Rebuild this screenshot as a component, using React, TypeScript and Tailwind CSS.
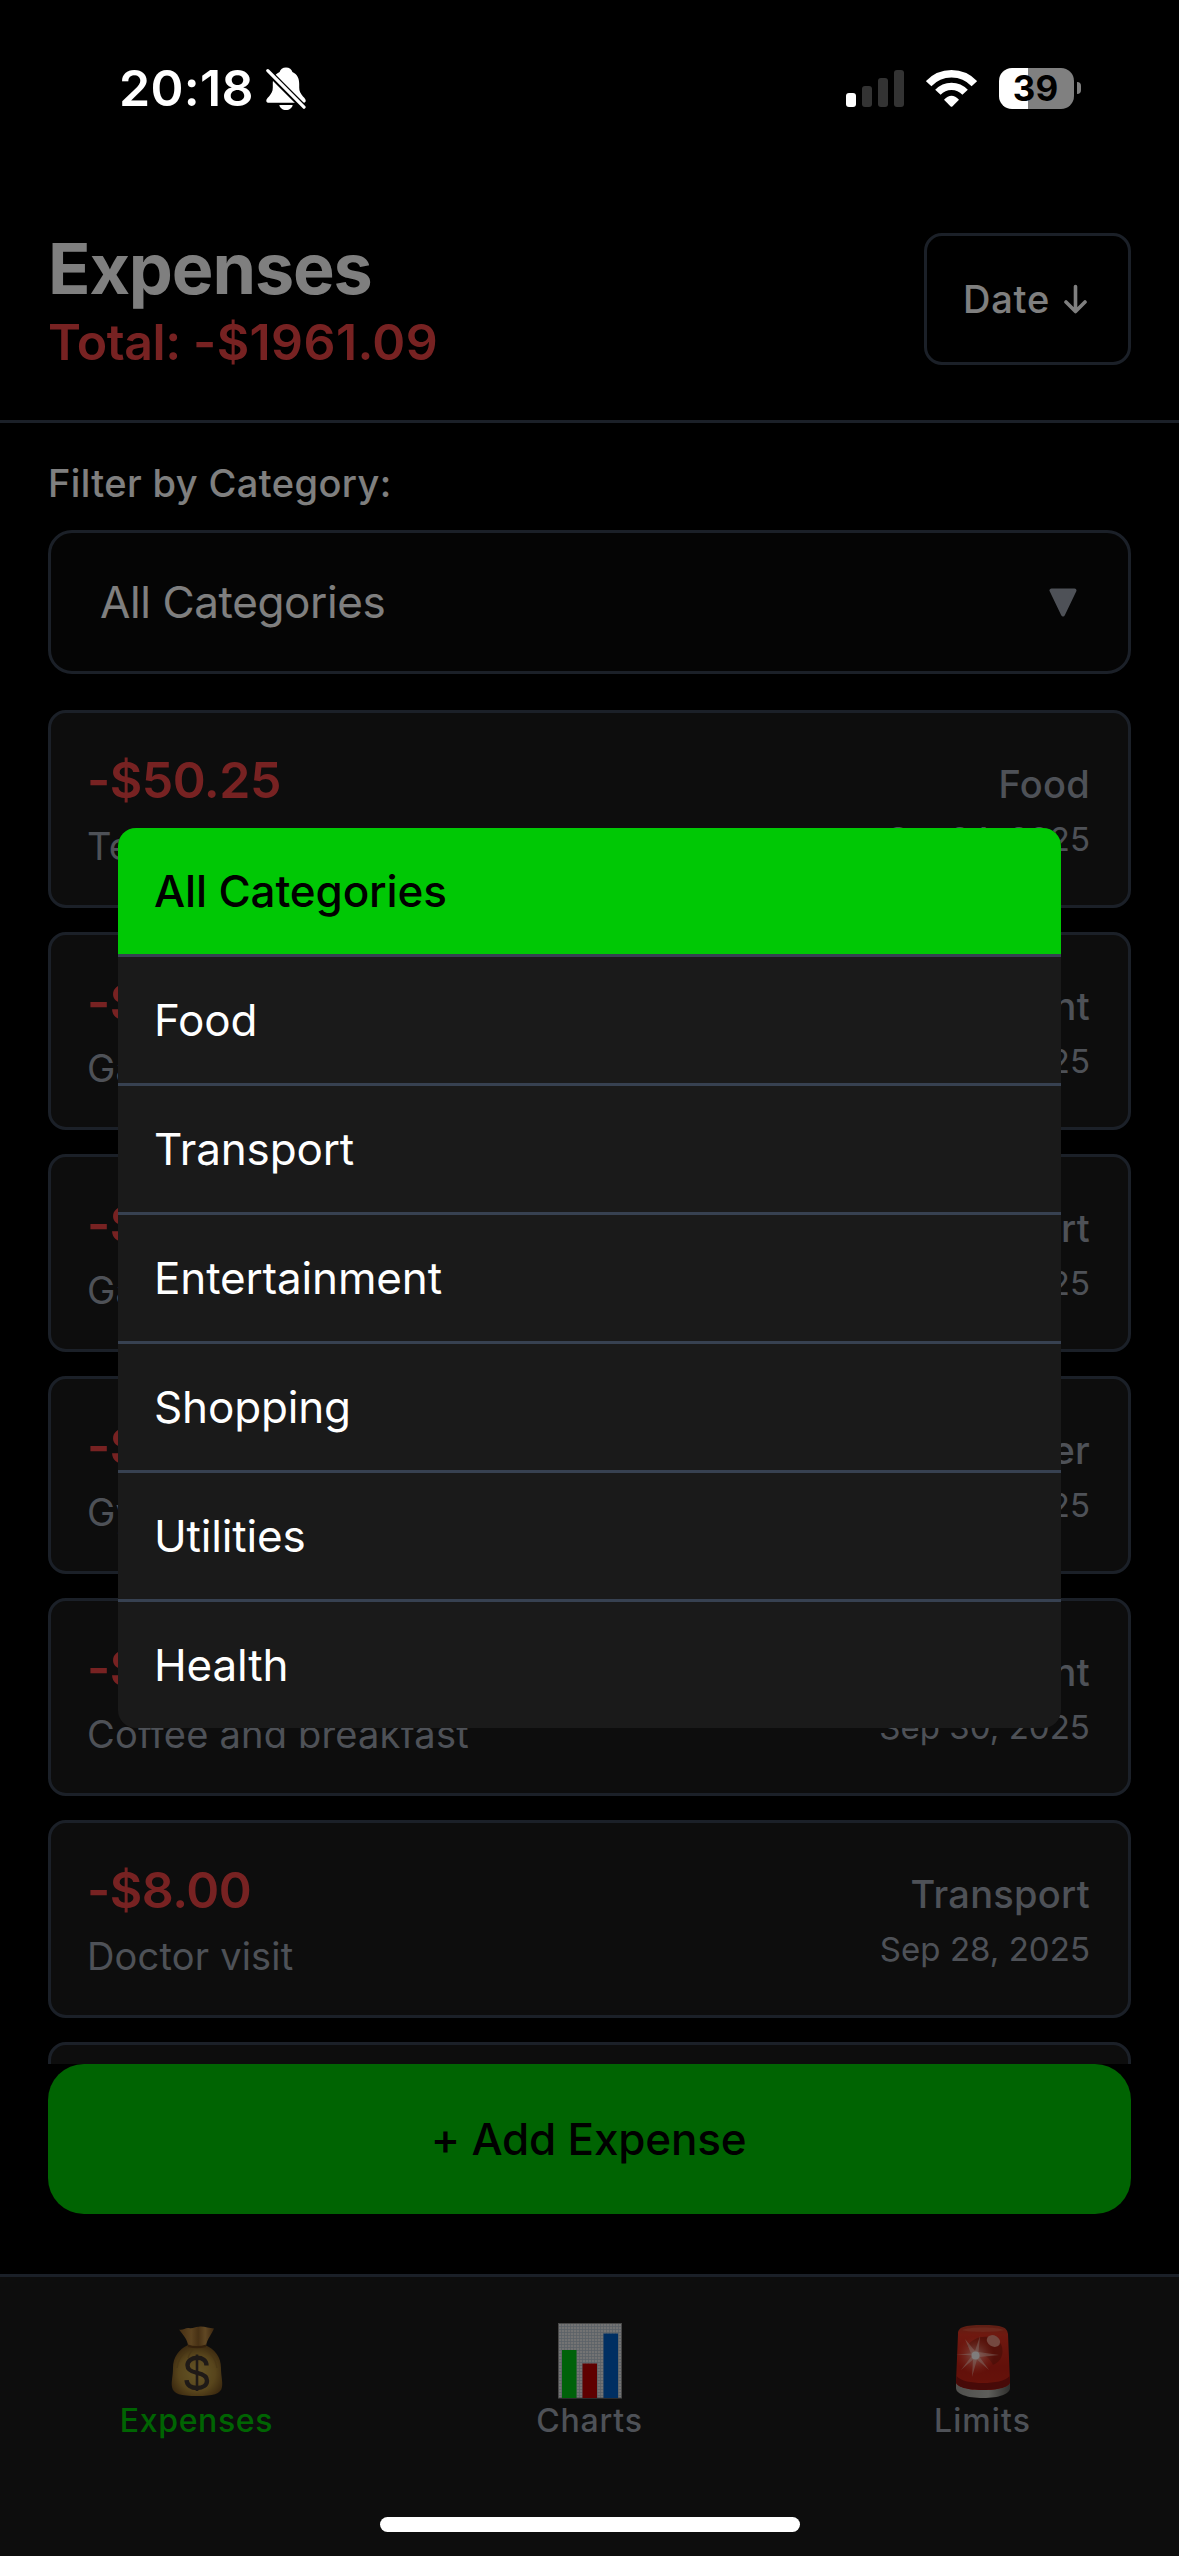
type Expense = { amount: string; note: string; category: string; date: string };

const expenses: Expense[] = [
  { amount: "-$50.25", note: "Team lunch", category: "Food", date: "Oct 24, 2025" },
  { amount: "-$35.00", note: "Games", category: "Entertainment", date: "Oct 15, 2025" },
  { amount: "-$42.80", note: "Gas station", category: "Transport", date: "Oct 10, 2025" },
  { amount: "-$60.00", note: "Gym membership", category: "Other", date: "Oct 5, 2025" },
  { amount: "-$12.50", note: "Coffee and breakfast", category: "Entertainment", date: "Sep 30, 2025" },
  { amount: "-$8.00", note: "Doctor visit", category: "Transport", date: "Sep 28, 2025" },
  { amount: "-$24.99", note: "Movie tickets", category: "Shopping", date: "Sep 27, 2025" },
];

const categories = [
  "All Categories",
  "Food",
  "Transport",
  "Entertainment",
  "Shopping",
  "Utilities",
  "Health",
];

function BellOffIcon() {
  return (
    <svg width="40" height="43" viewBox="0 0 40 43" fill="none">
      <path
        d="M20 0.5c-3.3 0-5.8 1.9-6.4 4.6C8.700 7.300 6.800 11.500 6.800 17v3.500c0 4-1.300 6-3.800 8.900C1 31.500 0.300 32.300 0.300 33.700c0 1.300 1 2.100 2.500 2.100h34.400c1.500 0 2.500-.8 2.500-2.100 0-1.400-.7-2.200-2.700-4.300-2.500-2.900-3.800-4.900-3.800-8.900V17c0-5.500-1.900-9.700-6.800-11.900C25.800 2.400 23.300.5 20 .5z"
        fill="white"
      />
      <path d="M13.300 38h13.400c-.5 2.900-3.200 5-6.700 5s-6.200-2.100-6.700-5z" fill="white" />
      <path d="M1 3.500L39 41.500" stroke="black" strokeWidth="6.500" />
      <path d="M1.800 3.600L38 40.200" stroke="white" strokeWidth="3.200" strokeLinecap="round" />
    </svg>
  );
}

function WifiIcon() {
  return (
    <svg width="51" height="37" viewBox="0 0 51 37" fill="none">
      <path d="M2.650 13.700A31.250 31.250 0 0 1 48.350 13.700" stroke="white" strokeWidth="7.500" />
      <path d="M11.900 22.300A18.600 18.600 0 0 1 39.100 22.300" stroke="white" strokeWidth="7.400" />
      <path d="M18 29.800Q25.500 21.800 33 29.800L26.300 36.500Q25.500 37.200 24.700 36.500Z" fill="white" />
    </svg>
  );
}

function StatusBar() {
  return (
    <div className="relative z-20 flex h-[177px] shrink-0 items-center justify-between pr-[98px] pb-px pl-[119px]">
      <div className="flex items-center">
        <span className="w-[147px] text-[50px] leading-[60px] font-semibold tracking-[0.32px]">20:18</span>
        <BellOffIcon />
      </div>
      <div className="flex items-center gap-[22px]">
        <div className="flex h-[37px] items-end gap-[6px]">
          <div className="h-[14px] w-[10px] rounded-[3px] bg-white" />
          <div className="h-[21px] w-[10px] rounded-[3px] bg-[#333333]" />
          <div className="h-[29px] w-[10px] rounded-[3px] bg-[#333333]" />
          <div className="h-[37px] w-[10px] rounded-[3px] bg-[#333333]" />
        </div>
        <WifiIcon />
        <div className="flex items-center gap-[3px]">
          <div className="flex h-[41px] w-[75px] items-center justify-center rounded-[13px] bg-[linear-gradient(to_right,#ffffff_29px,#808080_29px)] pr-[2px] text-[35px] leading-[41px] font-bold text-black">
            39
          </div>
          <div className="h-[12px] w-[4px] rounded-r-full bg-[#808080]" />
        </div>
      </div>
    </div>
  );
}

function Header() {
  return (
    <header className="flex h-[246px] shrink-0 items-center justify-between border-b-[3px] border-[#374151] px-[48px]">
      <div>
        <h1 className="h-[88px] text-[70px] leading-[88px] font-bold tracking-[-1.13px]">Expenses</h1>
        <p className="h-[60px] text-[50px] leading-[58px] font-semibold tracking-[0.4px] text-[#ef4444]">
          <span className="tracking-[-0.4px]">Total: </span>
          -$1961.09
        </p>
      </div>
      <button className="flex h-[132px] w-[207px] items-center justify-between rounded-[18px] border-[3px] border-[#374151] px-[36px] pt-px">
        <span className="text-[38px] font-medium tracking-[0.8px]">Date</span>
        <svg width="31" height="30" viewBox="0 0 31 30" fill="none">
          <path
            d="M14.500 2.500V27M5 18L14.500 27.500L24 18"
            stroke="white"
            strokeWidth="3.600"
            strokeLinecap="round"
            strokeLinejoin="round"
          />
        </svg>
      </button>
    </header>
  );
}

function ExpenseCard({ amount, note, category, date }: Expense) {
  return (
    <li className="flex h-[198px] shrink-0 justify-between rounded-[18px] border-[3px] border-[#374151] bg-[#1a1a1a] py-[36px] pr-[38px] pl-[36px]">
      <div>
        <div className="h-[62px] text-[50px] leading-[62px] font-semibold tracking-[-0.5px] text-[#ef4444]">
          {amount}
        </div>
        <div className="mt-[11px] h-[48px] text-[38px] leading-[48px] tracking-[0.2px] text-[#9ca3af]">{note}</div>
      </div>
      <div className="pt-[12px] text-right text-[#9ca3af]">
        <div className="h-[47px] text-[38px] leading-[47px] font-medium tracking-[0.3px]">{category}</div>
        <div className="mt-[11px] h-[40px] text-[33px] leading-[40px] tracking-[0.050px]">{date}</div>
      </div>
    </li>
  );
}

function MoneyBagIcon() {
  return (
    <svg width="52" height="70" viewBox="0 0 52 70">
      <defs>
        <radialGradient id="bag" cx="50%" cy="55%" r="60%">
          <stop offset="0" stopColor="#c9aa4e" />
          <stop offset="0.6" stopColor="#b08a38" />
          <stop offset="1" stopColor="#6e4a1c" />
        </radialGradient>
        <linearGradient id="neck" x1="0" x2="1">
          <stop offset="0" stopColor="#8a5c26" />
          <stop offset="0.35" stopColor="#b98740" />
          <stop offset="0.55" stopColor="#8f6229" />
          <stop offset="0.75" stopColor="#c08f48" />
          <stop offset="1" stopColor="#7a4f1f" />
        </linearGradient>
      </defs>
      <path
        d="M17 19C8 23 2 31 2 42C2 50 0 56 1 61C2 68 10 70 26 70C42 70 50 68 51 61C52 56 50 50 50 42C50 31 44 23 34 19Z"
        fill="url(#bag)"
      />
      <path
        d="M17 24C11 28 7 34 6 42M35 24C41 28 45 34 46 42M22 23C20 26 18 28 17 32"
        stroke="#8f6b2b"
        strokeWidth="1.500"
        fill="none"
        opacity="0.7"
      />
      <path
        d="M8 3.500C12 4.500 14 1.500 18 2C22 3 24 0.500 28 0.700C33 0 38 2.500 43 2.500C41 8 36 13 35 20H17C17 14 12 9 8 3.500Z"
        fill="url(#neck)"
      />
      <path d="M17 18.500Q26 21.500 35 18.500V21Q26 23.500 17 21Z" fill="#6b4319" />
      <path
        d="M35.500 39.500C35.500 34.500 31.500 31.800 26 31.800C20.500 31.800 16.500 35 16.500 39.300C16.500 43.700 19.500 45.500 26 46.900C32.500 48.300 36 50.300 36 54.700C36 59.300 31.800 62 26 62C20 62 15.800 59 15.600 54.200"
        stroke="#3f342f"
        strokeWidth="4.400"
        fill="none"
      />
      <path d="M26 28.500V65" stroke="#3f342f" strokeWidth="2.600" />
    </svg>
  );
}

function BarChartIcon() {
  return (
    <svg width="64" height="76" viewBox="0 0 64 76">
      <defs>
        <pattern id="grid" width="3" height="3" patternUnits="userSpaceOnUse">
          <rect width="3" height="3" fill="#e6e6e6" />
          <path d="M0 0H3M0 0V3" stroke="#b4c2ce" strokeWidth="1.400" />
        </pattern>
      </defs>
      <rect x="0.500" y="0.500" width="63" height="74.500" fill="url(#grid)" stroke="#8f8f8f" />
      <rect x="4" y="27" width="14.500" height="48" fill="#00c414" />
      <rect x="24.500" y="40.500" width="14.500" height="34.500" fill="#be0000" />
      <rect x="45.500" y="10.500" width="14.500" height="64.500" fill="#005fc4" />
      <path d="M0 75.500H64" stroke="#555555" />
    </svg>
  );
}

function SirenIcon() {
  return (
    <svg width="56" height="74" viewBox="0 0 56 74">
      <defs>
        <linearGradient id="dome" x1="0" x2="0" y1="0" y2="1">
          <stop offset="0" stopColor="#b8402a" />
          <stop offset="0.15" stopColor="#e03220" />
          <stop offset="0.65" stopColor="#c42014" />
          <stop offset="1" stopColor="#d02616" />
        </linearGradient>
        <linearGradient id="base" x1="0" x2="1">
          <stop offset="0" stopColor="#a09f9a" />
          <stop offset="0.6" stopColor="#bdbdb6" />
          <stop offset="1" stopColor="#5d5d59" />
        </linearGradient>
        <radialGradient id="glow">
          <stop offset="0" stopColor="#ffffff" />
          <stop offset="0.3" stopColor="#ffb9aa" stopOpacity="0.75" />
          <stop offset="1" stopColor="#ff5a3c" stopOpacity="0" />
        </radialGradient>
      </defs>
      <path d="M1 57V64C1 70 12 74 28 74C44 74 55 70 55 64V57Z" fill="url(#base)" />
      <path d="M3 10C3 3 9 1 28 1C47 1 52 3 53 10L55 58C55 63 43 66 28 66C13 66 1 63 1 58Z" fill="url(#dome)" />
      <path
        d="M1.500 52C6 57 16 59 28 59C40 59 50 57 54.800 52L55 58C55 63 43 66 28 66C13 66 1 63 1 58Z"
        fill="#8e1410"
      />
      <path d="M12 22C20 11 36 9 46 20C50 29 46 38 38 41C36 36 30 30 24 28Z" fill="#8e1c10" opacity="0.65" />
      <path d="M7 6C14 2.500 42 2.500 49 6C42 8.500 14 8.500 7 6Z" fill="#e8694f" opacity="0.5" />
      <ellipse cx="38.500" cy="17" rx="7" ry="5.500" transform="rotate(30 38.500 17)" fill="#e89080" />
      <circle cx="20.500" cy="31.500" r="19" fill="url(#glow)" opacity="0.7" />
      <path
        d="M20.500 31.500L1 30.500L16 29.500L10 15L20 27L25 12L23.500 28L44 31L24.500 33L34 46L22 35.500L17 53L18 35.500L6 46L16 33Z"
        fill="#ffd5ca"
        opacity="0.5"
      />
      <circle cx="20.500" cy="31.500" r="4" fill="white" opacity="0.9" />
    </svg>
  );
}

function TabBar() {
  return (
    <nav className="grid h-[282px] shrink-0 grid-cols-3 border-t-[3px] border-[#374151] bg-[#1a1a1a] pt-[46px] text-center text-[32px] leading-[40px] font-medium tracking-[0.8px] text-[#9ca3af]">
      <div className="flex flex-col items-center gap-[2px] text-[#00c805]">
        <div className="flex h-[76px] items-center">
          <MoneyBagIcon />
        </div>
        <span className="tracking-[0.65px]">Expenses</span>
      </div>
      <div className="flex flex-col items-center gap-[2px]">
        <div className="flex h-[76px] items-center">
          <BarChartIcon />
        </div>
        <span>Charts</span>
      </div>
      <div className="flex flex-col items-center gap-[2px]">
        <div className="flex h-[76px] items-center">
          <SirenIcon />
        </div>
        <span className="tracking-[1.1px]">Limits</span>
      </div>
    </nav>
  );
}

function CategoryMenu() {
  return (
    <div className="absolute inset-0 z-10 flex items-center justify-center bg-black/50">
      <ul className="h-[900px] w-[943px] overflow-hidden rounded-[18px] bg-[#1a1a1a] text-[44px] tracking-[-0.15px]">
        {categories.map((name, i) => (
          <li
            key={name}
            className={
              i === 0
                ? "flex h-[129px] items-center border-b-[3px] border-[#374151] bg-[#00c805] bg-clip-padding px-[36px] font-medium text-black"
                : "flex h-[129px] items-center border-b-[3px] border-[#374151] px-[36px] text-white"
            }
          >
            {name}
          </li>
        ))}
      </ul>
    </div>
  );
}

export default function App() {
  return (
    <div className="relative flex h-[2556px] w-[1179px] flex-col overflow-hidden bg-black font-[Inter,sans-serif] text-white">
      <StatusBar />
      <Header />
      <main className="flex min-h-0 flex-1 flex-col px-[48px] pt-[36px] pb-[60px]">
        <label className="h-[49px] shrink-0 text-[38px] leading-[49px] font-medium tracking-[0.4px]">
          Filter by Category:
        </label>
        <div className="mt-[22px] flex h-[144px] shrink-0 items-center justify-between rounded-[24px] border-[3px] border-[#374151] bg-[#0a0a0a] pr-[51px] pl-[49px]">
          <span className="text-[44px] tracking-[-0.38px]">All Categories</span>
          <svg width="28" height="29" viewBox="0 0 28 29">
            <path
              d="M2.500 2.500H25.500L14 26.500Z"
              fill="#9ca3af"
              stroke="#9ca3af"
              strokeWidth="4"
              strokeLinejoin="round"
            />
          </svg>
        </div>
        <ul className="mt-[36px] flex min-h-0 flex-1 flex-col gap-[24px] overflow-hidden">
          {expenses.map((item) => (
            <ExpenseCard key={item.note} {...item} />
          ))}
        </ul>
        <button className="h-[150px] shrink-0 rounded-[36px] bg-[#00c805] pr-[2px] text-[44px] font-medium tracking-[-0.2px] text-black">
          + Add Expense
        </button>
      </main>
      <TabBar />
      <CategoryMenu />
      <div className="absolute bottom-[24px] left-[380px] z-20 h-[15px] w-[420px] rounded-full bg-white" />
    </div>
  );
}
